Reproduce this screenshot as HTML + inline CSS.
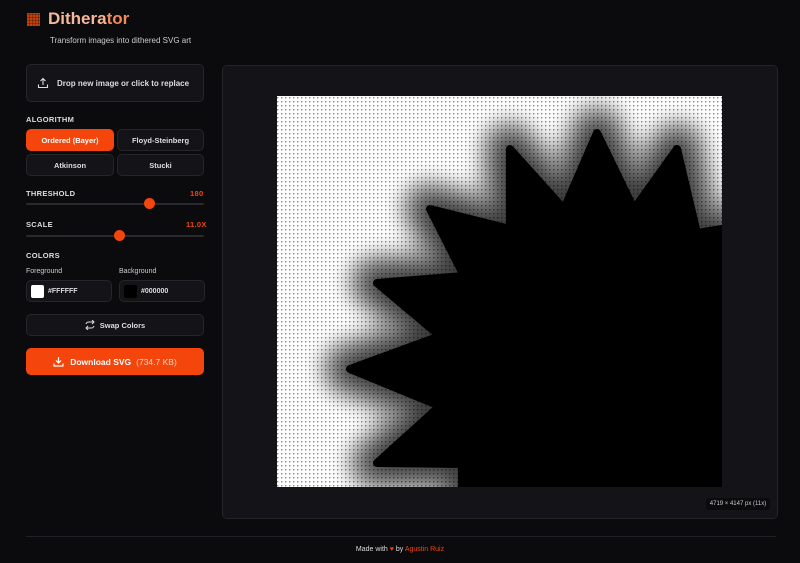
<!DOCTYPE html>
<html><head><style>
body{margin:0;width:800px;height:563px;background:#0b0a0c;font-family:"Liberation Sans",sans-serif;color:#e5e5e5;position:relative;overflow:hidden}
.abs{position:absolute}
.btn{position:absolute;border:1px solid #26252a;background:#141317;border-radius:5px;font-size:7.5px;font-weight:bold;color:#ddd;display:flex;align-items:center;justify-content:center}
.lbl{position:absolute;font-size:7.5px;font-weight:bold;color:#ddd;letter-spacing:.3px}
.track{position:absolute;left:26px;width:178px;height:2px;background:#2a292d;border-radius:1px}
.knob{position:absolute;width:11px;height:11px;border-radius:50%;background:#f4450c}
</style></head><body>
<div class="abs" style="left:27px;top:13px;width:13px;height:13px;background:#c2410c;background-image:repeating-linear-gradient(90deg,transparent 0 2px,rgba(0,0,0,.25) 2px 3px),repeating-linear-gradient(0deg,transparent 0 2px,rgba(0,0,0,.25) 2px 3px)"></div>
<div class="abs" style="left:48px;top:9px;font-size:17px;font-weight:bold;color:#f5b89a">Dithera<span style="color:#f08a5d">tor</span></div>
<div class="abs" style="left:50px;top:36px;font-size:8px;color:#ccc">Transform images into dithered SVG art</div>
<div class="btn" style="left:26px;top:64px;width:176px;height:36px;justify-content:flex-start;padding-left:0;font-size:8px">
<svg width="12" height="12" viewBox="0 0 12 12" style="margin:0 8px 0 10px" fill="none" stroke="#ddd" stroke-width="1.1"><path d="M6 8V1.5M3.5 4L6 1.5 8.5 4M1.5 7.5v3h9v-3"/></svg>Drop new image or click to replace</div>
<div class="lbl" style="left:26px;top:115px">ALGORITHM</div>
<div class="btn" style="left:26px;top:129px;width:86px;height:20px;background:#f4450c;border-color:#f4450c;color:#fff">Ordered (Bayer)</div>
<div class="btn" style="left:117px;top:129px;width:85px;height:20px">Floyd-Steinberg</div>
<div class="btn" style="left:26px;top:154px;width:86px;height:20px">Atkinson</div>
<div class="btn" style="left:117px;top:154px;width:85px;height:20px">Stucki</div>
<div class="lbl" style="left:26px;top:189px">THRESHOLD</div>
<div class="lbl" style="left:190px;top:189px;color:#f4450c">180</div>
<div class="track" style="top:203px"></div><div class="knob" style="left:144px;top:198px"></div>
<div class="lbl" style="left:26px;top:220px">SCALE</div>
<div class="lbl" style="left:186px;top:220px;color:#f4450c">11.0X</div>
<div class="track" style="top:235px"></div><div class="knob" style="left:114px;top:230px"></div>
<div class="lbl" style="left:26px;top:251px">COLORS</div>
<div class="abs" style="left:26px;top:268px;font-size:7px;color:#ccc">Foreground</div>
<div class="abs" style="left:119px;top:268px;font-size:7px;color:#ccc">Background</div>
<div class="btn" style="left:26px;top:280px;width:84px;height:20px;justify-content:flex-start;font-size:7px"><span style="width:13px;height:13px;background:#fff;border-radius:2px;margin:0 4px 0 4px"></span>#FFFFFF</div>
<div class="btn" style="left:119px;top:280px;width:84px;height:20px;justify-content:flex-start;font-size:7px"><span style="width:13px;height:13px;background:#000;border-radius:2px;margin:0 4px 0 4px"></span>#000000</div>
<div class="btn" style="left:26px;top:314px;width:176px;height:20px">
<svg width="10" height="10" viewBox="0 0 10 10" fill="none" stroke="#ddd" stroke-width="1" style="margin-right:5px"><path d="M1 4a3 3 0 0 1 3-2h5M7 0l2 2-2 2M9 6a3 3 0 0 1-3 2H1M3 10 1 8l2-2"/></svg>Swap Colors</div>
<div class="btn" style="left:26px;top:348px;width:178px;height:27px;background:#f4450c;border:none;color:#fff;font-size:8.5px">
<svg width="11" height="11" viewBox="0 0 11 11" fill="none" stroke="#fff" stroke-width="1.2" style="margin-right:6px"><path d="M5.5 1v6M3 4.5l2.5 2.5L8 4.5M1 7.5V10h9V7.5"/></svg>Download SVG <span style="font-weight:normal;color:#ffd5c4;margin-left:5px">(734.7 KB)</span></div>
<div class="abs" style="left:222px;top:65px;width:554px;height:452px;background:#141317;border:1px solid #242328;border-radius:5px"></div>
<svg class="abs" style="left:277px;top:96px" width="445" height="391" viewBox="277 96 445 391">
<defs>
<pattern id="d" width="4" height="4" patternUnits="userSpaceOnUse"><rect x="1" y="1" width="1.4" height="1.4" fill="#888"/></pattern>
<filter id="b" x="-30%" y="-30%" width="160%" height="160%"><feGaussianBlur stdDeviation="10"/></filter>
<clipPath id="c"><rect x="277" y="96" width="445" height="391"/></clipPath>
<polygon id="s" points="722,487 462,487 462,464 377,463 440,406 350,369 440,336 377,283 464,276 430,209 510,229 510,149 564,209 597,133 634,209 677,149 697,233 722,229"/>
</defs>
<rect x="277" y="96" width="445" height="391" fill="#fff"/>
<rect x="277" y="96" width="445" height="391" fill="url(#d)"/>
<g clip-path="url(#c)">
<use href="#s" filter="url(#b)" fill="#000" stroke="#000" stroke-width="60" stroke-linejoin="round" opacity=".4"/>
<use href="#s" filter="url(#b)" fill="#000" stroke="#000" stroke-width="26" stroke-linejoin="round" opacity=".6"/>
<use href="#s" fill="#000" stroke="#000" stroke-width="8" stroke-linejoin="round"/>
</g>
</svg>
<div class="abs" style="left:706px;top:498px;width:64px;height:12px;background:#0b0a0c;border-radius:3px;font-size:6px;color:#ccc;text-align:center;line-height:12px">4719 × 4147 px (11x)</div>
<div class="abs" style="left:26px;top:536px;width:750px;height:1px;background:#222126"></div>
<div class="abs" style="left:0;width:800px;top:546px;text-align:center;font-size:7px;color:#ddd">Made with <span style="color:#f4450c">♥</span> by <span style="color:#f4450c">Agustin Ruiz</span></div>
</body></html>
